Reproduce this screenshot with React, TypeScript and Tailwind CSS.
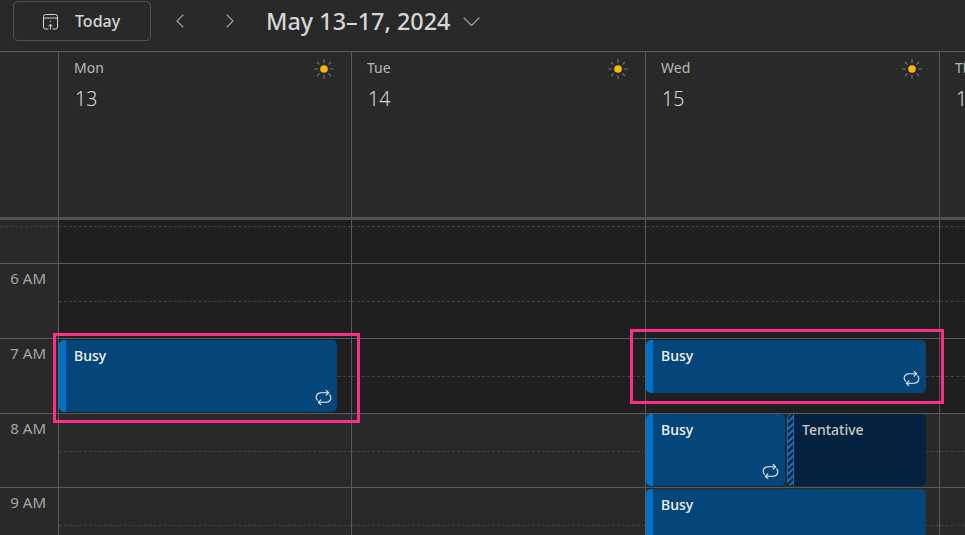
import React from 'react';

const RepeatIcon: React.FC = () => (
  <svg width="17" height="17" viewBox="0 0 16 16" fill="none" stroke="#f0f0f0" strokeWidth="1" strokeLinecap="round" strokeLinejoin="round">
    <path d="M10.5 1.2 12.8 3.5 10.5 5.8" />
    <path d="M12.8 3.5H5.2a4.2 4.2 0 0 0-3 7" />
    <path d="M5.5 14.8 3.2 12.5 5.5 10.2" />
    <path d="M3.2 12.5h7.6a4.2 4.2 0 0 0 3-7" />
  </svg>
);

const SunIcon: React.FC = () => (
  <svg width="22" height="22" viewBox="0 0 22 22" fill="none" stroke="#6e6e6e" strokeWidth="1.2">
    <path d="M11 1v4M11 17v4M1 11h4M17 11h4M4 4l2.6 2.6M15.4 15.4 18 18M4 18l2.6-2.6M15.4 6.6 18 4" />
    <circle cx="11" cy="11" r="3.8" fill="#ffb900" stroke="none" />
  </svg>
);

const TodayIcon: React.FC = () => (
  <svg width="17" height="17" viewBox="0 0 17 17" fill="none" stroke="#d6d6d6" strokeWidth="1" strokeLinecap="round" strokeLinejoin="round">
    <path d="M6 16H3.5A2 2 0 0 1 1.5 14V3.5a2 2 0 0 1 2-2h10a2 2 0 0 1 2 2V14a2 2 0 0 1-2 2H11" />
    <path d="M1.5 5h14" />
    <path d="M8.5 16v-4.5M6.8 13l1.7-1.7 1.7 1.7" />
    <circle cx="8.5" cy="8.3" r="0.6" fill="#d6d6d6" stroke="none" />
  </svg>
);

const Chevron: React.FC<{ d: string; w?: number; h?: number }> = ({ d, w = 10, h = 14 }) => (
  <svg width={w} height={h} viewBox={`0 0 ${w} ${h}`} fill="none" stroke="#a3a3a3" strokeWidth="1.1" strokeLinecap="round" strokeLinejoin="round">
    <path d={d} />
  </svg>
);

const EventCard: React.FC<{ top: number; height: number; width: number; label: string; repeat?: boolean; iconRight?: number }> = ({
  top,
  height,
  width,
  label,
  repeat,
  iconRight = 6,
}) => (
  <div
    className="absolute left-0 flex overflow-hidden rounded-[5px] bg-[#04457a]"
    style={{ top, height, width }}
  >
    <div className="w-[7px] shrink-0 bg-[#0072c9]" />
    <div className="pl-2 pt-[6px] text-[14px] leading-[20px] font-medium text-[#f5f5f5]">{label}</div>
    {repeat && (
      <div className="absolute bottom-[6px] flex" style={{ right: iconRight }}>
        <RepeatIcon />
      </div>
    )}
  </div>
);

const TentativeCard: React.FC<{ top: number; height: number; left: number; width: number }> = ({ top, height, left, width }) => (
  <div className="absolute flex overflow-hidden rounded-[5px] bg-[#02223f]" style={{ top, height, left, width }}>
    <div className="w-[7px] shrink-0 border-x border-[#0a6fc4] bg-[repeating-linear-gradient(135deg,#0a6fc4_0px,#0a6fc4_2.4px,#14202e_2.4px,#14202e_4.6px)]" />
    <div className="pl-2 pt-[6px] text-[14px] leading-[20px] font-medium text-[#c8c8c8]">Tentative</div>
  </div>
);

// one hour in the grid, solid line on top and dashed line halfway
const HourSlot: React.FC<{ dark?: boolean }> = ({ dark }) => (
  <div className={`flex h-[74.67px] shrink-0 flex-col border-t border-[#5a5a5a] ${dark ? 'bg-[#1f1f1f]' : ''}`}>
    <div className="h-[37px] shrink-0" />
    <div className="flex-1 border-t border-dashed border-[#404040]" />
  </div>
);

const DayHeader: React.FC<{ day: string; date: number; sun?: boolean }> = ({ day, date, sun = true }) => (
  <div className="relative min-w-0 overflow-hidden border-l border-[#5a5a5a] pl-[15px] pt-[5px]">
    <div className="flex h-[22px] items-start justify-between pr-[16px] pt-px">
      <span className="text-[14px] leading-[20px] text-[#b8b8b8]">{day}</span>
      {sun && <SunIcon />}
    </div>
    <div className="mt-[6px] pl-px text-[19.5px] leading-[28px] font-light text-[#d8d8d8]">{date}</div>
  </div>
);

const DayColumn: React.FC<{ children?: React.ReactNode }> = ({ children }) => (
  <div className="relative flex min-w-0 flex-col border-l border-[#5a5a5a]">
    <div className="h-[6px] shrink-0 bg-[#1f1f1f]" />
    <div className="h-[37.4px] shrink-0 border-t border-dashed border-[#404040] bg-[#1f1f1f]" />
    <HourSlot dark />
    <HourSlot dark />
    <HourSlot />
    <HourSlot />
    {children}
  </div>
);

const times = ['6 AM', '7 AM', '8 AM', '9 AM'];

export default function App() {
  return (
    <div className="relative h-[535px] w-[965px] overflow-hidden bg-[#292929] font-['Noto_Sans',sans-serif]">
      {/* toolbar */}
      <div className="flex h-[52px] items-start border-b border-[#5a5a5a] pl-[13px] pt-px">
        <button className="flex h-[40px] w-[138px] items-center rounded-[5px] border border-[#525252] pl-[28px]">
          <TodayIcon />
          <span className="ml-[16px] text-[16px] font-medium text-[#d6d6d6]">Today</span>
        </button>
        <div className="ml-[24px] mt-[13px] flex">
          <Chevron d="M8 1 2 7l6 6" />
        </div>
        <div className="ml-[40px] mt-[13px] flex">
          <Chevron d="M2 1l6 6-6 6" />
        </div>
        <span className="ml-[31px] mt-[1px] text-[23.4px] leading-[38px] font-medium whitespace-nowrap text-[#d6d6d6]">May 13–17, 2024</span>
        <div className="ml-[13px] mt-[16px] flex">
          <Chevron d="M1 1l7.5 7.5L16 1" w={17} h={10} />
        </div>
      </div>

      {/* day headers */}
      <div className="grid h-[165px] grid-cols-[58px_293px_294px_294px_26px] border-b-[3px] border-[#525252] box-content">
        <div />
        <DayHeader day="Mon" date={13} />
        <DayHeader day="Tue" date={14} />
        <DayHeader day="Wed" date={15} />
        <DayHeader day="Thu" date={16} sun={false} />
      </div>

      {/* time grid */}
      <div className="grid grid-cols-[58px_293px_294px_294px_26px]">
        <div className="flex flex-col">
          <div className="h-[6px] shrink-0" />
          <div className="h-[37.4px] shrink-0 border-t border-dashed border-[#404040]" />
          {times.map((t) => (
            <div key={t} className="h-[74.67px] shrink-0 border-t border-[#5a5a5a] pr-[12px] pt-[4px] text-right text-[15px] leading-[20px] text-[#a6a6a6]">
              {t}
            </div>
          ))}
        </div>
        <DayColumn>
          <EventCard top={120} height={72} width={278} label="Busy" repeat iconRight={5} />
        </DayColumn>
        <DayColumn />
        <DayColumn>
          <EventCard top={120} height={53} width={280} label="Busy" repeat />
          <EventCard top={194} height={72} width={139} label="Busy" repeat />
          <TentativeCard top={194} height={72} left={141} width={139} />
          <EventCard top={269} height={72} width={280} label="Busy" />
        </DayColumn>
        <DayColumn />
      </div>

      {/* pink annotation boxes */}
      <div className="absolute top-[333px] left-[53px] h-[90px] w-[307px] border-[3px] border-[#f8308a]" />
      <div className="absolute top-[329px] left-[630px] h-[75px] w-[314px] border-[3px] border-[#f8308a]" />
    </div>
  );
}
